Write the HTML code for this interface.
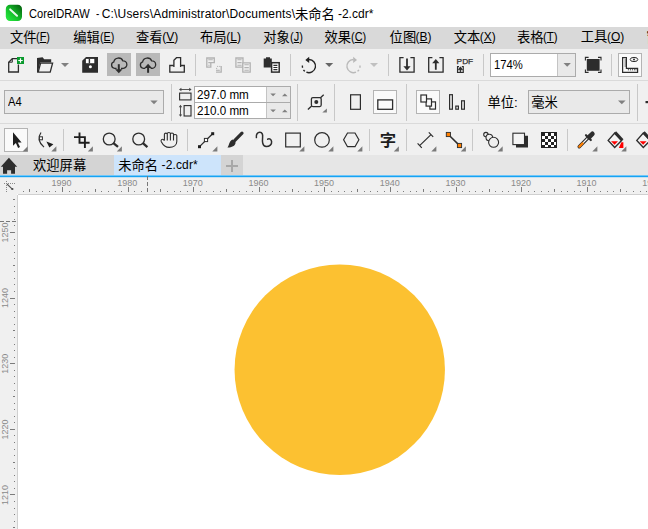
<!DOCTYPE html>
<html><head><meta charset="utf-8">
<style>
html,body{margin:0;padding:0;}
body{width:648px;height:529px;overflow:hidden;background:#fff;position:relative;font-family:"Liberation Sans","Noto Sans CJK SC",sans-serif;color:#000;}
.a{position:absolute;box-sizing:border-box;}
.t{position:absolute;white-space:nowrap;line-height:1;transform-origin:0 0;}
.t u{text-decoration:underline;text-underline-offset:1px;}
#title{left:0;top:0;width:648px;height:27px;background:#fff;}
#menu{left:0;top:27px;width:648px;height:22px;background:#d9d9d9;}
#tb1{left:0;top:49px;width:648px;height:31px;background:#f0f0f0;}
#pb{left:0;top:80px;width:648px;height:44px;background:#f0f0f0;border-top:1px solid #dadada;}
#tbx{left:0;top:123px;width:648px;height:32px;background:#f0f0f0;border-top:1px solid #dadada;}
#tabs{left:0;top:155px;width:648px;height:20px;background:#e6e6e6;}
#tab1{left:0;top:155px;width:114px;height:20px;background:#d4d4d4;}
#tab2{left:114px;top:155px;width:107px;height:20px;background:#cde4fb;}
#tab3{left:221px;top:155px;width:22px;height:20px;background:#d4d4d4;}
#tabline{left:0;top:175px;width:648px;height:1px;background:#2aa9e0;}
#hr{left:0;top:176px;width:648px;height:18px;background:#f0f0f0;}
#vr{left:0;top:194px;width:17px;height:335px;background:#f0f0f0;}
#canvas{left:17px;top:194px;width:631px;height:335px;background:#fff;}
.box{background:#e9e9e9;border:1px solid #ababab;}
.wbox{background:#fff;border:1px solid #ababab;}
.hl{background:#b9b9b9;}
.sel{background:#fafafa;border:1px solid #b4b4b4;}
.sep{width:1px;background:#c8c8c8;}
</style></head><body>
<div class="a" id="title"></div>
<div class="a" id="menu"></div>
<div class="a" id="tb1"></div>
<div class="a" id="pb"></div>
<div class="a" id="tbx"></div>
<div class="a" id="tabs"></div>
<div class="a" id="tab1"></div>
<div class="a" id="tab2"></div>
<div class="a" id="tab3"></div>
<div class="a" id="hr"></div>
<div class="a" id="vr"></div>
<div class="a" id="canvas"></div>

<!-- toolbar 1 highlights / boxes -->
<div class="a hl" style="left:107px;top:53px;width:24px;height:23px;"></div>
<div class="a hl" style="left:136px;top:53px;width:24px;height:23px;"></div>
<div class="a sep" style="left:195px;top:54px;height:22px;"></div>
<div class="a sep" style="left:290px;top:54px;height:22px;"></div>
<div class="a sep" style="left:388px;top:54px;height:22px;"></div>
<div class="a sep" style="left:483px;top:54px;height:22px;"></div>
<div class="a sep" style="left:611px;top:54px;height:22px;"></div>
<div class="a wbox" style="left:490px;top:53px;width:86px;height:24px;"></div>
<div class="a" style="left:557px;top:54px;width:18px;height:22px;background:#e9e9e9;border-left:1px solid #c4c4c4;"></div>
<div class="a sel" style="left:618px;top:53px;width:24px;height:24px;"></div>

<!-- property bar boxes -->
<div class="a box" style="left:4px;top:90px;width:160px;height:24px;"></div>
<div class="a sep" style="left:171px;top:84px;height:37px;"></div>
<div class="a wbox" style="left:194px;top:86px;width:97px;height:17px;"></div>
<div class="a wbox" style="left:194px;top:102px;width:97px;height:17px;"></div>
<div class="a" style="left:266px;top:87px;width:24px;height:15px;background:#e9e9e9;border-left:1px solid #c4c4c4;"></div>
<div class="a" style="left:266px;top:103px;width:24px;height:15px;background:#e9e9e9;border-left:1px solid #c4c4c4;"></div>
<div class="a sep" style="left:297px;top:84px;height:37px;"></div>
<div class="a sep" style="left:334px;top:84px;height:37px;"></div>
<div class="a sel" style="left:373px;top:90px;width:24px;height:24px;"></div>
<div class="a sep" style="left:406px;top:84px;height:37px;"></div>
<div class="a sel" style="left:416px;top:90px;width:24px;height:24px;"></div>
<div class="a sep" style="left:478px;top:84px;height:37px;"></div>
<div class="a box" style="left:528px;top:90px;width:102px;height:24px;"></div>
<div class="a sep" style="left:637px;top:84px;height:37px;"></div>

<!-- toolbox -->
<div class="a sel" style="left:4px;top:128px;width:24px;height:24px;"></div>
<div class="a sep" style="left:63px;top:129px;height:22px;"></div>
<div class="a sep" style="left:187px;top:129px;height:22px;"></div>
<div class="a sep" style="left:369px;top:129px;height:22px;"></div>
<div class="a sep" style="left:406px;top:129px;height:22px;"></div>
<div class="a sep" style="left:472px;top:129px;height:22px;"></div>
<div class="a sep" style="left:567px;top:129px;height:22px;"></div>

<div class="t" style="left:29.3px;top:8.0px;font-size:12px;transform:scaleX(0.926);">CoreIDRAW</div>
<div class="t" style="left:95.7px;top:8.0px;font-size:12px;transform:scaleX(0.825);">-</div>
<div class="t" style="left:101.8px;top:7.6px;font-size:12px;letter-spacing:0.16px;">C:\Users\Administrator\Documents\</div>
<div class="t" style="left:295.0px;top:7.8px;font-size:13.3px;">未命名</div>
<div class="t" style="left:337.9px;top:7.6px;font-size:12px;letter-spacing:0.02px;">-2.cdr*</div>
<div class="t" style="left:10.0px;top:31.3px;font-size:13.3px;">文件</div>
<div class="t" style="left:36.4px;top:30.7px;font-size:12px;transform:scaleX(0.907);">(<u>F</u>)</div>
<div class="t" style="left:73.2px;top:31.3px;font-size:13.3px;">编辑</div>
<div class="t" style="left:99.8px;top:30.7px;font-size:12px;transform:scaleX(0.9);">(<u>E</u>)</div>
<div class="t" style="left:136.0px;top:31.3px;font-size:13.3px;">查看</div>
<div class="t" style="left:162.3px;top:30.7px;font-size:12px;">(<u>V</u>)</div>
<div class="t" style="left:200.0px;top:31.3px;font-size:13.3px;">布局</div>
<div class="t" style="left:226.2px;top:30.7px;font-size:12px;">(<u>L</u>)</div>
<div class="t" style="left:263.2px;top:31.3px;font-size:13.3px;">对象</div>
<div class="t" style="left:289.8px;top:30.7px;font-size:12px;transform:scaleX(0.917);">(<u>J</u>)</div>
<div class="t" style="left:324.5px;top:31.3px;font-size:13.3px;">效果</div>
<div class="t" style="left:351.4px;top:30.7px;font-size:12px;transform:scaleX(0.913);">(<u>C</u>)</div>
<div class="t" style="left:389.6px;top:31.3px;font-size:13.3px;">位图</div>
<div class="t" style="left:415.6px;top:30.7px;font-size:12px;">(<u>B</u>)</div>
<div class="t" style="left:453.7px;top:31.3px;font-size:13.3px;">文本</div>
<div class="t" style="left:479.8px;top:30.7px;font-size:12px;">(<u>X</u>)</div>
<div class="t" style="left:517.0px;top:31.3px;font-size:13.3px;">表格</div>
<div class="t" style="left:543.4px;top:30.7px;font-size:12px;transform:scaleX(0.957);">(<u>T</u>)</div>
<div class="t" style="left:580.7px;top:30.3px;font-size:13.3px;">工具</div>
<div class="t" style="left:607.0px;top:30.7px;font-size:12px;">(<u>O</u>)</div>
<div class="t" style="left:646.3px;top:31.3px;font-size:13.3px;">窗口</div>
<div class="t" style="left:7.8px;top:96.1px;font-size:12px;transform:scaleX(0.933);">A4</div>
<div class="t" style="left:197.3px;top:89.3px;font-size:12px;transform:scaleX(0.971);">297.0 mm</div>
<div class="t" style="left:197.3px;top:105.3px;font-size:12px;transform:scaleX(0.971);">210.0 mm</div>
<div class="t" style="left:493.9px;top:59.4px;font-size:12px;transform:scaleX(0.938);">174%</div>
<div class="t" style="left:487.5px;top:96px;font-size:13.3px;">单位:</div>
<div class="t" style="left:531.2px;top:96px;font-size:13.3px;">毫米</div>
<div class="t" style="left:33.0px;top:159.2px;font-size:13.3px;">欢迎屏幕</div>
<div class="t" style="left:118.2px;top:159.2px;font-size:13.3px;">未命名</div>
<div class="t" style="left:161.5px;top:158.6px;font-size:12px;letter-spacing:0.15px;">-2.cdr*</div>

<svg class="a" id="ov" style="left:0;top:0" width="648" height="529" viewBox="0 0 648 529">
<defs>
<linearGradient id="cg" x1="0" y1="1" x2="1" y2="0"><stop offset="0" stop-color="#2cf044"/><stop offset="0.45" stop-color="#14c02a"/><stop offset="1" stop-color="#04560c"/></linearGradient>
</defs>
<!-- canvas circle -->
<circle cx="339.75" cy="369.7" r="105.2" fill="#fcc131"/>
<!-- app icon -->
<rect x="5.8" y="4.8" width="16.2" height="16.2" rx="4.2" fill="url(#cg)"/>
<path d="M10.2 9.4L17 15.8" stroke="#fff" stroke-width="2" stroke-linecap="round" opacity="0.9"/>
<!-- blue tab line -->
<rect x="0" y="175.4" width="648" height="1.8" fill="#17a3f3"/>

<g fill="none" stroke="#2d2d2d" stroke-width="1.3">
<!-- new doc -->
<path d="M17 58.7H12.3L8.7 62.2V72H18.4V64.5"/>
<path d="M12.3 58.7V62.2H8.7" stroke-width="1"/>
<!-- open folder front -->
<path d="M40.6 63.2H52.6L50.2 72.1H38.2Z"/>
<!-- cloud download -->
<path d="M116.6 68.3H114.6A3.3 3.3 0 0 1 113.8 61.9A4.8 4.8 0 0 1 122.9 60.9A3.7 3.7 0 0 1 123.4 68.3H121"/>
<path d="M118.8 64.2V71" stroke-width="2"/>
<!-- cloud upload -->
<path d="M145.4 68.3H143.4A3.3 3.3 0 0 1 142.6 61.9A4.8 4.8 0 0 1 151.7 60.9A3.7 3.7 0 0 1 152.2 68.3H150.6"/>
<path d="M148.1 66V72.8" stroke-width="2"/>
<!-- print -->
<path d="M169.8 65.5H184.3V72.1H169.8Z"/>
<path d="M173.9 67V60.2L176.5 57.7H180.6V67" fill="#f6f6f6"/>
<!-- import/export -->
<path d="M403.6 57.7H399.9V72.1H414.1V57.7H410.4"/>
<path d="M432.4 57.7H428.7V72.1H443.1V57.7H439.4"/>
<path d="M407 58.6V68M435.8 61V69.8" stroke-width="1.8"/>
<!-- portrait / landscape -->
<rect x="350.6" y="94.8" width="9.8" height="14.5" stroke-width="1.2"/>
<rect x="377.8" y="99.9" width="14.8" height="9.4" stroke-width="1.3"/>
<!-- width/height icons -->
<rect x="179.6" y="93.1" width="11.4" height="6.8" stroke-width="1.1"/>
<rect x="184.1" y="105.6" width="6.9" height="10.4" stroke-width="1.1"/>
</g>
<g fill="#2d2d2d">
<!-- folder back -->
<path d="M37 58L42.6 57.2L44.2 59.2H51.2V62.6H40.2L37.9 72.6H37Z"/>
<!-- save -->
<path d="M86 57H98V72.8H82.2V60.8Z"/>
<!-- cloud arrow heads -->
<path d="M115 69.2H122.6L118.8 73.3Z"/>
<path d="M144.3 68H151.9L148.1 63.8Z"/>
<!-- import/export heads -->
<path d="M403.4 66.2H410.6L407 70.4Z"/>
<path d="M432.2 63.2H439.4L435.8 59Z"/>
<!-- paste clipboard -->
<path d="M263.7 58.6H266V57.2H270V58.6H271.8V62H270.9V67.4H263.7Z"/>
</g>
<!-- save details -->
<rect x="85.9" y="58.9" width="8.4" height="4.3" fill="#fff"/>
<rect x="88.7" y="58.9" width="1.4" height="4.3" fill="#2d2d2d"/>
<circle cx="90.4" cy="66.7" r="1.5" fill="#fff"/>
<!-- new doc green plus -->
<rect x="17" y="57" width="7" height="7" fill="#0a9a2e"/>
<path d="M20.5 58.3V62.7M18.3 60.5H22.7" stroke="#fff" stroke-width="1.2"/>
<!-- dropdown arrows -->
<path d="M61 63H69L65 67Z" fill="#808080"/>
<path d="M325.2 63.1H333.2L329.2 67Z" fill="#666"/>
<path d="M370 63.1H378L374 67Z" fill="#c0c0c0"/>
<path d="M563.5 63H570.9L567.2 66.7Z" fill="#808080"/>
<path d="M156 100.5H164" stroke="none"/>
<path d="M150.3 100.6H157.7L154 104.3Z" fill="#808080"/>
<path d="M618 100.6H625.6L621.8 104.3Z" fill="#808080"/>
<!-- spinner arrows -->
<path d="M270.3 93.4H275.9L273.1 96.2ZM270.3 109.4H275.9L273.1 112.2Z" fill="#808080"/>
<path d="M282 96.2H287.6L284.8 93.4ZM282 112.2H287.6L284.8 109.4Z" fill="#808080"/>
<!-- width/height arrows -->
<g stroke="#444" stroke-width="0.9" fill="#444">
<path d="M180 89.5H190.6" />
<path d="M179 89.5L181.4 87.8V91.2ZM191.6 89.5L189.2 87.8V91.2Z" stroke="none"/>
<path d="M180.5 106V115.6"/>
<path d="M180.5 104.8L178.8 107.2H182.2ZM180.5 116.8L178.8 114.4H182.2Z" stroke="none"/>
</g>
<!-- cut (disabled) -->
<g fill="none" stroke="#b2b2b2" stroke-width="1.3">
<path d="M206.8 58H214.3V62.6H210.8V67.1H206.8Z"/>
<path d="M208.3 59.7H212.8M208.3 62.6H210.8M208.3 65.3H209.6" stroke-width="1.1"/>
<path d="M221.2 66V72.1H216"/>
<path d="M216 70.3H219.8" stroke-width="1.1"/>
<path d="M217 66.4H218.2M219.2 66.4H220.4M216 68.4H217.2" stroke-width="1"/>
<!-- copy (disabled) -->
<path d="M235.9 58H243V67.1H235.9Z"/>
<path d="M242.8 62.8H250.2V72.2H242.8Z" fill="#f0f0f0"/>
<path d="M237.4 59.7H241.6M237.4 62.6H241.6M237.4 65.3H241.6M244.4 64.7H248.8M244.4 67.6H248.8M244.4 70.3H248.8" stroke-width="1.1"/>
</g>
<!-- redo -->
<g fill="none" stroke="#b9b9b9" stroke-width="1.4"><path d="M353.4 59.5A6.6 6.6 0 1 0 356.0 72.2"/><path d="M357.5 71.3A6.6 6.6 0 0 0 358.9 69.8M359.8 67.8A6.6 6.6 0 0 0 360.0 65.5"/></g>
<path d="M353.2 56.8V63L357 59.9Z" fill="#b9b9b9"/>
<!-- paste page -->
<rect x="271.6" y="62.7" width="7.6" height="9.4" fill="#fff" stroke="#2d2d2d" stroke-width="1.5"/>
<path d="M273.4 65.4H277.4M273.4 67.5H277.4M273.4 69.6H277.4" stroke="#2d2d2d" stroke-width="1.1"/>
<!-- undo -->
<g fill="none" stroke="#222" stroke-width="1.35"><path d="M309.0 59.5A6.6 6.6 0 1 1 306.4 72.2"/><path d="M304.9 71.3A6.6 6.6 0 0 1 303.5 69.8M302.6 67.8A6.6 6.6 0 0 1 302.4 65.5"/></g>
<path d="M309.2 56.8V63L305.3 59.9Z" fill="#222"/>
<!-- PDF -->
<text x="456.6" y="63.8" font-family="'Liberation Sans',sans-serif" font-size="8" fill="#2d2d2d" stroke="#2d2d2d" stroke-width="0.25" textLength="16.6" lengthAdjust="spacingAndGlyphs">PDF</text>
<path d="M459 66.6H457.5V72.4H463.3V66.6H461.8M457.5 69.7H463.3M460.4 72.4V67.6M458.8 69.2L460.4 67.4L462 69.2" fill="none" stroke="#2d2d2d" stroke-width="1.1"/>
<!-- full screen -->
<rect x="586.8" y="59" width="12.8" height="11.8" fill="#2d2d2d"/>
<path d="M585.4 60.4V57.4H588.6M598 57.4H601V60.4M601 69.4V72.4H598M588.6 72.4H585.4V69.4" fill="none" stroke="#2d2d2d" stroke-width="1.1"/>
<!-- ruler eye -->
<path d="M622.6 57.6H626.4V68.4H637.6V72.3H622.6Z" fill="none" stroke="#2d2d2d" stroke-width="1.2"/>
<path d="M624.5 60H626.4M624.5 62H626.4M624.5 64H626.4M624.5 66H626.4M628.4 68.4V70.4M630.4 68.4V70.4M632.4 68.4V70.4M634.4 68.4V70.4M636 68.4V70.4" stroke="#2d2d2d" stroke-width="0.8" fill="none"/>
<ellipse cx="634" cy="59.5" rx="3.8" ry="2.1" fill="none" stroke="#2d2d2d" stroke-width="1"/>
<circle cx="634" cy="59.5" r="1" fill="#2d2d2d"/>
<!-- all pages icon -->
<path d="M307.9 109.5L323.7 94.7" stroke="#2d2d2d" stroke-width="1.3"/>
<rect x="311.4" y="97.6" width="9.8" height="9" rx="1.5" fill="#f0f0f0" stroke="#2d2d2d" stroke-width="1.3"/>
<circle cx="316.3" cy="102.1" r="2" fill="#2d2d2d"/>
<path d="M322.3 112.5H326.9V108.4Z" fill="#7a7a7a"/>
<!-- overlapping squares -->
<g fill="#fafafa" stroke="#2d2d2d" stroke-width="1.2">
<rect x="429.9" y="101.9" width="5.6" height="7.2"/>
<rect x="426.1" y="98.9" width="5.4" height="7.2"/>
<rect x="420.9" y="95" width="5.6" height="7"/>
</g>
<g fill="none" stroke="#2d2d2d" stroke-width="1.2">
<rect x="449.6" y="94.7" width="2.8" height="14.5"/>
<rect x="455.8" y="106.1" width="2.6" height="3.1"/>
<rect x="461.6" y="100.8" width="2.8" height="8.4"/>
</g>
<!-- right edge dots -->
<rect x="645.5" y="101" width="3" height="2.2" fill="#2d2d2d"/>

<!-- TOOLBOX -->
<g fill="#7a7a7a">
<path d="M22.6 151.4H27.7V146.3Z"/>
<path d="M51.3 151.4H56.4V146.3Z"/>
<path d="M87.8 151.4H92.9V146.3Z"/>
<path d="M116.8 151.4H121.9V146.3Z"/>
<path d="M212.3 151.4H217.4V146.3Z"/>
<path d="M299.3 151.4H304.4V146.3Z"/>
<path d="M328.3 151.4H333.4V146.3Z"/>
<path d="M357.3 151.4H362.4V146.3Z"/>
<path d="M393.8 151.4H398.9V146.3Z"/>
<path d="M431.3 151.4H436.4V146.3Z"/>
<path d="M460.8 151.4H465.9V146.3Z"/>
<path d="M497.6 151.4H502.7V146.3Z"/>
<path d="M592.3 151.4H597.4V146.3Z"/>
<path d="M621.3 151.4H626.4V146.3Z"/>
</g>
<!-- pick -->
<path d="M13 132.2V145.8L15.9 143.1L18.1 147.9L20 147L17.8 142.4H21.6Z" fill="#1e1e1e"/>
<!-- shape tool -->
<path d="M41 132.5C37.6 137.5 38.6 142.5 44 147.1" fill="none" stroke="#2d2d2d" stroke-width="1.2"/>
<rect x="39.4" y="136.8" width="3" height="3" fill="#fff" stroke="#2d2d2d" stroke-width="1"/>
<path d="M46.4 141.4L53.4 144.2L49.4 147.4Z" fill="#1e1e1e"/>
<!-- crop -->
<path d="M74 137.1H85.8M79.5 132.5V143.6M78.6 142.8H89.6M84.9 136.2V148" fill="none" stroke="#1e1e1e" stroke-width="1.9"/>
<!-- zoom tools -->
<g fill="none" stroke="#2d2d2d">
<circle cx="109.2" cy="139" r="5.9" stroke-width="1.3"/>
<path d="M113.4 143.2L118 146.9" stroke-width="2.3"/>
<circle cx="138.7" cy="139" r="5.9" stroke-width="1.3"/>
<path d="M142.9 143.2L147.4 147.1" stroke-width="2.3"/>
<!-- hand -->
<path d="M164.4 140.6V134.2C164.4 132.8 167.3 132.8 167.3 134.2M167.3 140.6V133.5C167.3 132.1 170.4 132.1 170.4 133.5V140.6M170.4 133.9C170.4 132.6 173.5 132.6 173.5 133.9V140.6M173.5 135.4C173.5 134.1 176.8 134.1 176.8 135.6V141.4C176.8 145 173.6 147.4 169.2 147.4C165 147.4 162.8 144.6 161.3 141.7C160.4 139.7 162.2 138.7 163.4 139.7L164.4 140.6" stroke-width="1.1"/>
</g>
<!-- freehand -->
<path d="M199.5 146.6L212.6 133.8" stroke="#2d2d2d" stroke-width="1.3"/>
<rect x="198" y="145.2" width="3" height="3" fill="#1e1e1e"/>
<rect x="211.2" y="132.2" width="3" height="3" fill="#1e1e1e"/>
<rect x="204.4" y="138.4" width="3.2" height="3.2" fill="#fff" stroke="#2d2d2d" stroke-width="1"/>
<!-- brush -->
<path d="M242 133.2L234.6 140.6" stroke="#2d2d2d" stroke-width="3.2" stroke-linecap="round"/>
<path d="M232.6 139.6L235.6 142.6C235.4 146.4 231 147.8 227.4 147.6C229.4 146 228.6 141.4 232.6 139.6Z" fill="#2d2d2d"/>
<!-- smart curve -->
<path d="M256.4 137.6C255.8 134.5 257.6 132.3 259.8 132.3C262.4 132.3 262.9 134.8 262.6 137.5C262.3 140.5 262 146.6 266.3 146.6C269.6 146.6 272 144.4 271.6 141.6C271.3 139.4 269.4 138 267.7 139.2" fill="none" stroke="#2d2d2d" stroke-width="1.5" stroke-linecap="round"/>
<!-- rect ellipse polygon -->
<g fill="none" stroke="#2d2d2d" stroke-width="1.2">
<rect x="285.7" y="133.1" width="14.6" height="13.8"/>
<circle cx="322" cy="139.9" r="7.3"/>
<path d="M343.6 139.8L347.5 133H355L358.9 139.8L355 146.7H347.5Z"/>
<!-- dimension -->
<path d="M419.6 145.6L431 134.6M417.6 143.4L421.8 147.8M428.8 132.4L433.2 136.8"/>
</g>
<!-- text tool -->
<text x="379.8" y="146.4" font-family="'Noto Sans CJK SC',sans-serif" font-weight="bold" font-size="16.4" fill="#1e1e1e">字</text>
<!-- connector -->
<path d="M448.6 134.8L459.6 145.6" stroke="#2d2d2d" stroke-width="1.5"/>
<rect x="446.3" y="132.4" width="4.2" height="4.2" fill="#ff7f00" stroke="#2d2d2d" stroke-width="0.9"/>
<rect x="457.4" y="143.4" width="4.2" height="4.2" fill="#ff7f00" stroke="#2d2d2d" stroke-width="0.9"/>
<!-- blend -->
<g fill="#f0f0f0" stroke="#2d2d2d" stroke-width="1.1">
<circle cx="485.9" cy="134.6" r="2.2"/>
<circle cx="489.3" cy="137.6" r="3.3"/>
<circle cx="493.6" cy="142.3" r="5"/>
</g>
<!-- shadow -->
<path d="M516 147.6H528V135.8H525V144.6H516Z" fill="#2d2d2d"/>
<rect x="512.9" y="133.2" width="11.6" height="11.4" fill="#f4f4f4" stroke="#2d2d2d" stroke-width="1.1"/>
<!-- checker -->
<rect x="541" y="132" width="16" height="16" fill="#222"/>
<path d="M545 133h3v3h-3zM551 133h3v3h-3zM542 136h3v3h-3zM548 136h3v3h-3zM554 136h2v3h-2zM545 139h3v3h-3zM551 139h3v3h-3zM542 142h3v3h-3zM548 142h3v3h-3zM554 142h2v3h-2zM545 145h3v2h-3zM551 145h3v2h-3z" fill="#fff"/>
<!-- eyedropper -->
<path d="M579.2 146.8L588.6 137.2" stroke="#2d2d2d" stroke-width="3.4" stroke-linecap="round"/>
<path d="M579.6 146.4L588.4 137.4" stroke="#fff" stroke-width="1.3"/>
<path d="M579.3 146.7L582.6 143.3" stroke="#ff7f00" stroke-width="2.2" stroke-linecap="round"/>
<path d="M586 135.2L590.8 140" stroke="#2d2d2d" stroke-width="2.2" stroke-linecap="round"/>
<path d="M589.2 137L592.4 133.8" stroke="#2d2d2d" stroke-width="4.6" stroke-linecap="round"/>
<!-- fill bucket -->
<g>
<path d="M614.7 133L621.6 140.4L614.7 147.4L608.2 140.4Z" fill="#f4f4f4" stroke="#2d2d2d" stroke-width="1.4"/>
<path d="M615 132.4L622.4 140.2" stroke="#2d2d2d" stroke-width="3"/>
<path d="M611 141.2H618L614.6 144.8Z" fill="#f00"/>
<path d="M621.4 142.2H623.4V148H618.8Z" fill="#f00"/>
<path d="M643.3 133L650.2 140.4L643.3 147.4L636.8 140.4Z" fill="#f4f4f4" stroke="#2d2d2d" stroke-width="1.4"/>
<path d="M643.6 132.4L651 140.2" stroke="#2d2d2d" stroke-width="3"/>
<path d="M639.6 141.2H646.6L643.2 144.8Z" fill="#f00"/>
</g>
<!-- home -->
<path d="M8.9 157.7L17.2 166.7H15V173.7H11.1V170.3H7.1V173.7H3V166.7H0.8Z" fill="#2d2d2d"/>
<!-- plus tab -->
<path d="M226 166H238M232 160V172" stroke="#a8a8a8" stroke-width="2" fill="none"/>
<!-- origin icon -->
<path d="M4 183h1v1h-1zM6 183h1v1h-1zM8 183h1v1h-1zM10 183h1v1h-1zM12 183h1v1h-1zM14 183h1v1h-1zM6 181h1v1h-1zM6 183h1v1h-1zM6 185h1v1h-1zM6 187h1v1h-1zM6 189h1v1h-1zM6 191h1v1h-1z" fill="#8a8a8a" shape-rendering="crispEdges"/>
<path d="M7 184L12 188.8" stroke="#555" stroke-width="1.1"/>
<rect x="11.3" y="188" width="2" height="2" fill="#555"/>
<path d="M23 191v1M29 189v3M36 191v1M42 191v1M49 191v1M55 191v1M62 187v5M69 191v1M75 191v1M82 191v1M88 191v1M95 189v3M101 191v1M108 191v1M114 191v1M121 191v1M128 187v5M134 191v1M141 191v1M147 191v1M154 191v1M160 189v3M167 191v1M174 191v1M180 191v1M187 191v1M193 187v5M200 191v1M206 191v1M213 191v1M220 191v1M226 189v3M233 191v1M239 191v1M246 191v1M252 191v1M259 187v5M265 191v1M272 191v1M279 191v1M285 191v1M292 189v3M298 191v1M305 191v1M311 191v1M318 191v1M324 187v5M331 191v1M338 191v1M344 191v1M351 191v1M357 189v3M364 191v1M370 191v1M377 191v1M384 191v1M390 187v5M397 191v1M403 191v1M410 191v1M416 191v1M423 189v3M430 191v1M436 191v1M443 191v1M449 191v1M456 187v5M462 191v1M469 191v1M475 191v1M482 191v1M489 189v3M495 191v1M502 191v1M508 191v1M515 191v1M521 187v5M528 191v1M534 191v1M541 191v1M548 191v1M554 189v3M561 191v1M567 191v1M574 191v1M580 191v1M587 187v5M594 191v1M600 191v1M607 191v1M613 191v1M620 189v3M626 191v1M633 191v1M640 191v1M646 191v1" stroke="#7c7c7c" stroke-width="1" fill="none" transform="translate(0.5 0)" shape-rendering="crispEdges"/>
<g font-family="'Liberation Sans',sans-serif" font-size="9" fill="#8a8a8a"><text x="61.6" y="185.5" text-anchor="middle">1990</text><text x="127.2" y="185.5" text-anchor="middle">1980</text><text x="192.8" y="185.5" text-anchor="middle">1970</text><text x="258.5" y="185.5" text-anchor="middle">1960</text><text x="324.1" y="185.5" text-anchor="middle">1950</text><text x="389.7" y="185.5" text-anchor="middle">1940</text><text x="455.4" y="185.5" text-anchor="middle">1930</text><text x="521.0" y="185.5" text-anchor="middle">1920</text><text x="586.6" y="185.5" text-anchor="middle">1910</text><text x="652.2" y="185.5" text-anchor="middle">1900</text></g>
<path d="M13 199h2M14 206h1M14 212h1M14 219h1M14 225h1M10 232h5M14 239h1M14 245h1M14 252h1M14 258h1M13 265h2M14 271h1M14 278h1M14 284h1M14 291h1M10 298h5M14 304h1M14 311h1M14 317h1M14 324h1M13 330h2M14 337h1M14 344h1M14 350h1M14 357h1M10 363h5M14 370h1M14 376h1M14 383h1M14 390h1M13 396h2M14 403h1M14 409h1M14 416h1M14 422h1M10 429h5M14 435h1M14 442h1M14 449h1M14 455h1M13 462h2M14 468h1M14 475h1M14 481h1M14 488h1M10 494h5M14 501h1M14 508h1M14 514h1M14 521h1M13 527h2" stroke="#7c7c7c" stroke-width="1" fill="none" transform="translate(0 0.5)" shape-rendering="crispEdges"/>
<g font-family="'Liberation Sans',sans-serif" font-size="9" fill="#8a8a8a"><text transform="translate(8.2 232.5) rotate(-90)" text-anchor="middle">1250</text><text transform="translate(8.2 298.1) rotate(-90)" text-anchor="middle">1240</text><text transform="translate(8.2 363.8) rotate(-90)" text-anchor="middle">1230</text><text transform="translate(8.2 429.4) rotate(-90)" text-anchor="middle">1220</text><text transform="translate(8.2 495.0) rotate(-90)" text-anchor="middle">1210</text><text transform="translate(8.2 560.6) rotate(-90)" text-anchor="middle">1200</text></g>
<path d="M147.5 176V194" stroke="#787878" stroke-width="1" stroke-dasharray="4 2" fill="none" shape-rendering="crispEdges"/>
<path d="M0 221.5H17" stroke="#787878" stroke-width="1" stroke-dasharray="4 2" fill="none" shape-rendering="crispEdges"/>
<path d="M17.5 194.5H648M17.5 194.5V529" stroke="#d0d0d0" stroke-width="1" fill="none" shape-rendering="crispEdges"/>

</svg>
</body></html>
